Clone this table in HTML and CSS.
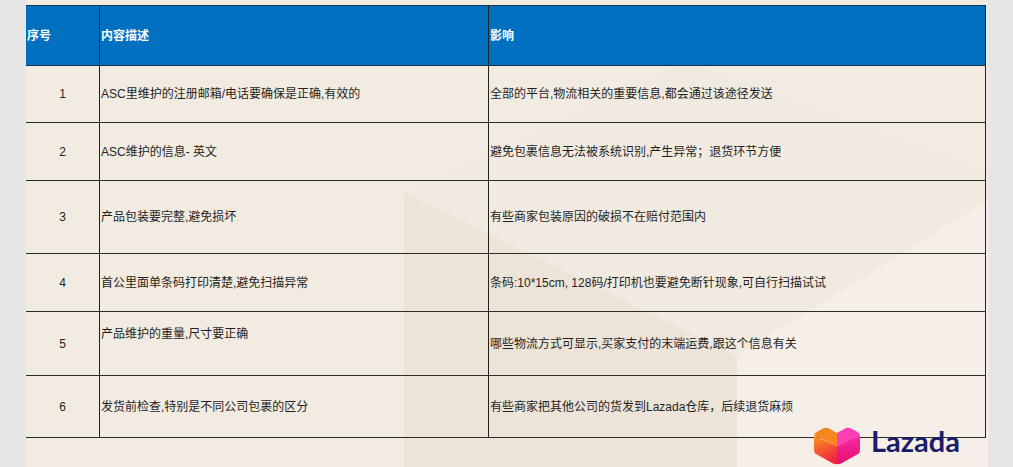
FILE: index.html
```html
<!DOCTYPE html>
<html lang="zh-CN">
<head>
<meta charset="utf-8">
<title>注意事项</title>
<link rel="stylesheet" href="styles.css">
</head>
<body>
<div class="slide">
  <svg class="backdrop" width="962" height="467" viewBox="0 0 962 467" aria-hidden="true">
    <polygon class="face-left" points="378,192 711,356 711,467 378,467"/>
    <polygon class="face-top" points="378,192 660,62 962,170 962,200 711,356"/>
    <polygon class="face-right" points="711,356 962,200 962,467 711,467"/>
  </svg>
  <div class="grid">
    <div class="cell head num-head">序号</div>
    <div class="cell head">内容描述</div>
    <div class="cell head">影响</div>

    <div class="cell num">1</div>
    <div class="cell">ASC里维护的注册邮箱/电话要确保是正确,有效的</div>
    <div class="cell">全部的平台,物流相关的重要信息,都会通过该途径发送</div>

    <div class="cell num">2</div>
    <div class="cell">ASC维护的信息- 英文</div>
    <div class="cell">避免包裹信息无法被系统识别,产生异常；退货环节方便</div>

    <div class="cell num">3</div>
    <div class="cell">产品包装要完整,避免损坏</div>
    <div class="cell">有些商家包装原因的破损不在赔付范围内</div>

    <div class="cell num">4</div>
    <div class="cell">首公里面单条码打印清楚,避免扫描异常</div>
    <div class="cell">条码:10*15cm, 128码/打印机也要避免断针现象,可自行扫描试试</div>

    <div class="cell num">5</div>
    <div class="cell raised">产品维护的重量,尺寸要正确</div>
    <div class="cell">哪些物流方式可显示,买家支付的末端运费,跟这个信息有关</div>

    <div class="cell num">6</div>
    <div class="cell">发货前检查,特别是不同公司包裹的区分</div>
    <div class="cell">有些商家把其他公司的货发到Lazada仓库，后续退货麻烦</div>
  </div>
  <div class="logo">
    <svg class="logo-mark" width="50" height="40" viewBox="0 0 50 40" aria-hidden="true">
      <defs>
        <linearGradient id="gl" x1="0" y1="0" x2="0.4" y2="1">
          <stop offset="0" stop-color="#f8961d"/>
          <stop offset="1" stop-color="#f2273f"/>
        </linearGradient>
        <linearGradient id="gr" x1="0" y1="0" x2="0" y2="1">
          <stop offset="0" stop-color="#f62aa6"/>
          <stop offset="1" stop-color="#e4106e"/>
        </linearGradient>
      </defs>
      <path d="M2 11 Q2 7 6 5 L11 2.5 Q14 1.2 17 2.6 L25 7 L25 20 L2 9.5 Z" fill="#f7861c"/>
      <path d="M2 10 L25 20 L25 38 Q23 38.5 21 37.5 L4 28 Q2 27 2 24 Z" fill="url(#gl)"/>
      <path d="M25 7 L33 2.6 Q36 1.2 39 2.5 L44 5 Q48 7 48 11 L25 20 Z" fill="#fa3fb5"/>
      <path d="M25 20 L48 10 L48 24 Q48 27 46 28 L29 37.5 Q27 38.5 25 38 Z" fill="url(#gr)"/>
    </svg>
    <span class="logo-text">Lazada</span>
  </div>
</div>
</body>
</html>
```

FILE: styles.css
```css
html, body {
  margin: 0;
  padding: 0;
}

body {
  background: #e6e6e6;
  width: 1013px;
  height: 467px;
  overflow: hidden;
  font-family: "Liberation Sans", "Noto Sans CJK SC", sans-serif;
}

.slide {
  position: relative;
  margin-left: 26px;
  width: 962px;
  height: 467px;
  background: #f2ebe1;
  padding-top: 5px;
  box-sizing: border-box;
  overflow: hidden;
}

.backdrop {
  position: absolute;
  left: 0;
  top: 0;
}

.face-left {
  fill: #ece4d9;
}

.face-top {
  fill: #f1eae0;
}

.face-right {
  fill: #f5efe7;
}

.grid {
  position: relative;
  display: grid;
  grid-template-columns: 74px 389px 497px;
  grid-template-rows: 61px 57px 58px 73px 58px 64px 62px;
  width: 960px;
}

.cell {
  display: flex;
  align-items: center;
  box-sizing: border-box;
  border-right: 1px solid #231f1c;
  border-bottom: 1px solid #2e2a26;
  padding-left: 1px;
  font-size: 12px;
  line-height: 16px;
  color: #1f1f1f;
  white-space: nowrap;
}

.head {
  background: #0070c0;
  color: #ffffff;
  font-weight: bold;
  border-top: 1px solid #1e3550;
  border-bottom-color: #1d2f45;
}

.num-head {
  border-right-color: #1a2a3a;
}

.num {
  justify-content: center;
  padding-left: 0;
}

.raised {
  padding-bottom: 20px;
}

.logo {
  position: absolute;
  left: 786px;
  top: 426px;
  display: flex;
  align-items: center;
  gap: 9px;
}

.logo-mark {
  display: block;
}

.logo-text {
  font-family: "Lato", "Liberation Sans", sans-serif;
  font-weight: bold;
  font-size: 29px;
  color: #1a1d6a;
  margin-top: -12px;
}
```
